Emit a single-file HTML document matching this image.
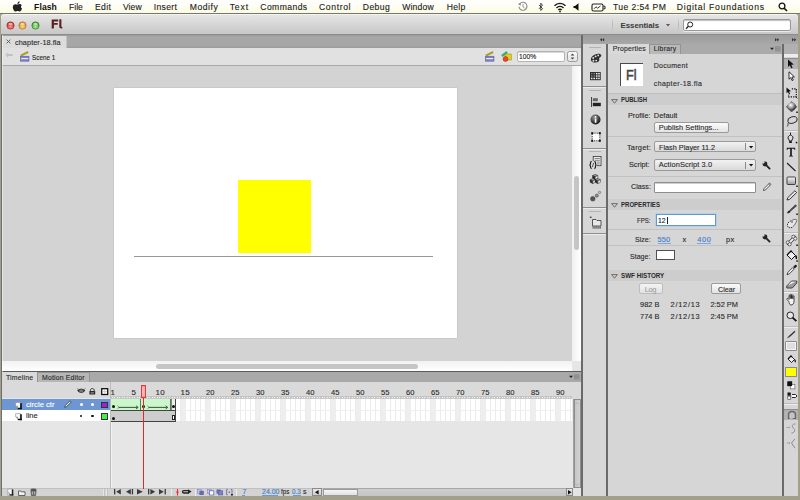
<!DOCTYPE html>
<html><head><meta charset="utf-8"><style>
html,body{margin:0;padding:0;width:800px;height:500px;overflow:hidden;background:#a2a08a;}
#root{position:relative;width:800px;height:500px;overflow:hidden;}
.r{position:absolute;}
.tx{position:absolute;font-family:"Liberation Sans",sans-serif;line-height:1;white-space:nowrap;-webkit-text-stroke:0.12px currentColor;}
svg{position:absolute;overflow:visible;}
</style></head><body><div id="root">
<div class="r" style="left:0px;top:0px;width:800px;height:500px;background:#a2a08a;"></div>
<div class="r" style="left:0px;top:0px;width:800px;height:13px;background:linear-gradient(#ffffff,#fbfbe4);"></div>
<div class="r" style="left:0px;top:13px;width:800px;height:1px;background:#77776a;"></div>
<div class="r" style="left:0px;top:14px;width:800px;height:1px;background:#a8a896;"></div>
<div class="r" style="left:1px;top:14px;width:797px;height:482px;background:#d5d5d5;border-radius:4px 4px 0 0;"></div>
<div class="r" style="left:1px;top:14px;width:797px;height:21px;background:linear-gradient(#e6e6e6,#c6c6c6);border-radius:4px 4px 0 0;box-shadow:inset 0 1px 0 #f4f4f4;"></div>
<div class="r" style="left:1px;top:34px;width:797px;height:1px;background:#8c8c8c;"></div>
<div class="r" style="left:612px;top:17px;width:1px;height:15px;background:linear-gradient(rgba(0,0,0,0),#b8b8b8,rgba(0,0,0,0));"></div>
<div class="r" style="left:678px;top:17px;width:1px;height:15px;background:linear-gradient(rgba(0,0,0,0),#b8b8b8,rgba(0,0,0,0));"></div>
<div class="r" style="left:1px;top:35px;width:581px;height:13px;background:linear-gradient(#9c9c9c,#a8a8a8 20%,#a6a6a6 85%,#999999);"></div>
<div class="r" style="left:1px;top:36px;width:65px;height:12px;background:#dcdcdc;box-shadow:1px 0 0 #c4c4c4;"></div>
<div class="r" style="left:1px;top:48px;width:581px;height:17px;background:#e1e1e1;"></div>
<div class="r" style="left:1px;top:65px;width:581px;height:1px;background:#a9a9a9;"></div>
<div class="r" style="left:1px;top:66px;width:571px;height:295px;background:#d3d3d3;"></div>
<div class="r" style="left:114px;top:88px;width:343px;height:250px;background:#ffffff;box-shadow:0 0 1px 0 #9a9a9a;"></div>
<div class="r" style="left:238px;top:180px;width:73px;height:73px;background:#ffff00;"></div>
<div class="r" style="left:134px;top:256px;width:299px;height:1px;background:#989898;"></div>
<div class="r" style="left:572px;top:66px;width:9px;height:295px;background:linear-gradient(90deg,#f0f0f0,#ffffff);"></div>
<div class="r" style="left:574px;top:176px;width:5px;height:74px;background:#c6c6c6;border-radius:3px;"></div>
<div class="r" style="left:1px;top:361px;width:571px;height:10px;background:linear-gradient(#f2f2f2,#ffffff);"></div>
<div class="r" style="left:156px;top:364px;width:262px;height:5px;background:#c6c6c6;border-radius:3px;"></div>
<div class="r" style="left:572px;top:361px;width:9px;height:10px;background:#e6e6e6;"></div>
<div class="r" style="left:1px;top:371px;width:581px;height:1px;background:#5a5a5a;"></div>
<div class="r" style="left:0.8px;top:35px;width:0.9px;height:461px;background:#6e6e6e;"></div>
<div class="r" style="left:1.7px;top:35px;width:0.8px;height:461px;background:rgba(255,255,255,0.45);"></div>
<div class="r" style="left:581px;top:35px;width:2px;height:461px;background:#6a6a6a;"></div>
<div class="r" style="left:583px;top:35px;width:215px;height:9px;background:linear-gradient(#9c9c9c,#a8a8a8);"></div>
<div class="r" style="left:583px;top:44px;width:23px;height:452px;background:#d7d7d7;"></div>
<div class="r" style="left:606px;top:44px;width:2px;height:452px;background:#6a6a6a;"></div>
<div class="r" style="left:608px;top:44px;width:174px;height:452px;background:#d6d6d6;"></div>
<div class="r" style="left:608px;top:44px;width:174px;height:10px;background:#aaaaaa;"></div>
<div class="r" style="left:608px;top:44px;width:41px;height:10px;background:#d9d9d9;"></div>
<div class="r" style="left:649px;top:44px;width:32px;height:10px;background:#b9b9b9;box-sizing:border-box;border:1px solid #949494;border-bottom:0;"></div>
<div class="r" style="left:782px;top:44px;width:2px;height:452px;background:#6a6a6a;"></div>
<div class="r" style="left:784px;top:44px;width:14px;height:452px;background:#d6d6d6;"></div>
<div class="r" style="left:784px;top:44px;width:14px;height:10px;background:#b0b0b0;"></div>
<div class="r" style="left:798px;top:35px;width:2px;height:461px;background:#a2a08a;"></div>
<div class="r" style="left:2px;top:372px;width:579px;height:10px;background:#a9a9a9;"></div>
<div class="r" style="left:2px;top:372px;width:35px;height:10px;background:#d9d9d9;"></div>
<div class="r" style="left:37px;top:372px;width:53px;height:10px;background:#b6b6b6;box-sizing:border-box;border:1px solid #949494;border-bottom:0;"></div>
<div class="r" style="left:2px;top:382px;width:571px;height:16px;background:#dadada;"></div>
<div class="r" style="left:2px;top:398px;width:571px;height:90px;background:#e6e6e6;"></div>
<div class="r" style="left:2px;top:399px;width:108px;height:11px;background:#6d96d3;"></div>
<div class="r" style="left:2px;top:410px;width:108px;height:11px;background:#ffffff;"></div>
<div class="r" style="left:110px;top:382px;width:1px;height:114px;background:#bcbcbc;"></div>
<div class="r" style="left:111px;top:421px;width:0.8px;height:75px;background:rgba(255,255,255,0.5);"></div>
<div class="r" style="left:2px;top:488px;width:579px;height:8px;background:#d3d3d3;box-shadow:inset 0 1px 0 #c0c0c0;"></div>
<div class="r" style="left:573px;top:382px;width:8px;height:106px;background:#d0d0d0;box-shadow:inset 1px 0 0 #a0a0a0;"></div>
<svg style="left:5.5px;top:20.5px;" width="9" height="9" viewBox="0 0 9 9"><defs><radialGradient id="g10" cx="50%" cy="65%" r="55%"><stop offset="0" stop-color="#ff9a90"/><stop offset="1" stop-color="#d02a20"/></radialGradient></defs><circle cx="4.5" cy="4.5" r="3.7" fill="url(#g10)" stroke="#8a2a22" stroke-width="0.5"/><ellipse cx="4.5" cy="2.9" rx="2.1" ry="1.2" fill="#fff" opacity="0.55"/></svg>
<svg style="left:18.0px;top:20.5px;" width="9" height="9" viewBox="0 0 9 9"><defs><radialGradient id="g22" cx="50%" cy="65%" r="55%"><stop offset="0" stop-color="#ffd890"/><stop offset="1" stop-color="#e08a18"/></radialGradient></defs><circle cx="4.5" cy="4.5" r="3.7" fill="url(#g22)" stroke="#9a6420" stroke-width="0.5"/><ellipse cx="4.5" cy="2.9" rx="2.1" ry="1.2" fill="#fff" opacity="0.55"/></svg>
<svg style="left:30.5px;top:20.5px;" width="9" height="9" viewBox="0 0 9 9"><defs><radialGradient id="g35" cx="50%" cy="65%" r="55%"><stop offset="0" stop-color="#b8eea0"/><stop offset="1" stop-color="#3e9e2a"/></radialGradient></defs><circle cx="4.5" cy="4.5" r="3.7" fill="url(#g35)" stroke="#386a28" stroke-width="0.5"/><ellipse cx="4.5" cy="2.9" rx="2.1" ry="1.2" fill="#fff" opacity="0.55"/></svg>
<svg style="left:50.5px;top:19px;" width="12" height="10" viewBox="0 0 12 10"><path d="M0.7 0.6 H7.2 V2.4 H2.9 V4.0 H6.7 V5.7 H2.9 V9.4 H0.7 Z" fill="#5a2020"/><path d="M8.3 0.2 H10.4 V7.3 C10.4 7.9 10.7 8.0 11.3 8.0 V9.4 C9.5 9.6 8.3 9.1 8.3 7.5 Z" fill="#5a2020"/></svg>
<svg style="left:12px;top:1px;" width="11" height="12" viewBox="0 0 11 12"><path d="M7.6 0.2 C7.7 1.6 6.8 2.9 5.4 3.0 C5.3 1.7 6.3 0.4 7.6 0.2 Z" fill="#222"/><path d="M5.4 3.6 C6.2 3.6 6.8 3.1 7.6 3.1 C8.5 3.1 9.3 3.6 9.8 4.3 C8.6 5.0 8.6 6.9 10.0 7.6 C9.6 8.8 8.8 10.6 7.6 10.6 C6.8 10.6 6.6 10.1 5.6 10.1 C4.6 10.1 4.3 10.6 3.5 10.6 C2.4 10.6 0.8 8.4 0.8 6.3 C0.8 4.5 2.0 3.3 3.4 3.3 C4.2 3.3 4.8 3.6 5.4 3.6 Z" fill="#222"/></svg>
<svg style="left:516.5px;top:1.2px;" width="12" height="11" viewBox="0 0 12 11"><path d="M2.0 5.8 A4.0 4.0 0 1 0 3.0 2.6" fill="none" stroke="#8a8a8a" stroke-width="1.1"/><path d="M0.8 3.0 L3.6 1.8 L3.8 4.8 Z" fill="#8a8a8a"/><path d="M6.0 3.0 V5.8 L7.6 7.0" fill="none" stroke="#8a8a8a" stroke-width="0.9"/></svg>
<svg style="left:538px;top:2px;" width="6" height="10" viewBox="0 0 6 10"><path d="M1 3 L4.5 6.5 L2.8 8.5 V1.2 L4.5 3.2 L1 6.8" fill="none" stroke="#333" stroke-width="0.9"/></svg>
<svg style="left:553px;top:1px;" width="14" height="12" viewBox="0 0 14 12"><path d="M1.5 4.8 A7.5 7.5 0 0 1 12.5 4.8" fill="none" stroke="#111" stroke-width="1.4"/><path d="M3.5 6.9 A4.8 4.8 0 0 1 10.5 6.9" fill="none" stroke="#111" stroke-width="1.4"/><path d="M5.4 8.9 A2.2 2.2 0 0 1 8.6 8.9" fill="none" stroke="#111" stroke-width="1.4"/><circle cx="7" cy="10.6" r="0.9" fill="#111"/></svg>
<svg style="left:572.5px;top:3px;" width="6" height="8" viewBox="0 0 6 8"><path d="M0.5 3 H2 L5.5 0.3 V7.7 L2 5 H0.5 Z" fill="#111"/></svg>
<svg style="left:591px;top:2.5px;" width="15" height="9" viewBox="0 0 15 9"><rect x="1" y="1" width="11" height="7" rx="1.5" fill="none" stroke="#222" stroke-width="1.1"/><path d="M12.5 3.2 H14 V5.8 H12.5" fill="none" stroke="#222" stroke-width="1"/><path d="M3 5.8 L5 3.8 L6.5 5.2 L9.5 3" fill="none" stroke="#222" stroke-width="0.9"/></svg>
<svg style="left:777.5px;top:2px;" width="10" height="10" viewBox="0 0 10 10"><circle cx="4" cy="4" r="2.9" fill="none" stroke="#111" stroke-width="1.3"/><path d="M6.2 6.2 L9 9" stroke="#111" stroke-width="1.6"/></svg>
<svg style="left:665.5px;top:24.2px;" width="4" height="3" viewBox="0 0 4 3"><path d="M0 0 H4 L2 2.5 Z" fill="#555"/></svg>
<div class="r" style="left:683px;top:19.2px;width:107.6px;height:11.4px;box-sizing:border-box;background:#fff;border:1px solid #9a9a9a;border-radius:2px;box-shadow:inset 0 1px 1px rgba(0,0,0,0.25), 0 1px 0 rgba(255,255,255,0.6);"></div>
<svg style="left:684.5px;top:20.5px;" width="9" height="9" viewBox="0 0 9 9"><circle cx="5.2" cy="3.5" r="2.5" fill="none" stroke="#222" stroke-width="1"/><path d="M3.4 5.3 L1 7.8" stroke="#222" stroke-width="1.3"/></svg>
<svg style="left:5.5px;top:39px;" width="5" height="5" viewBox="0 0 5 5"><path d="M0.6 0.6 L4.4 4.4 M4.4 0.6 L0.6 4.4" stroke="#555" stroke-width="0.9"/></svg>
<svg style="left:5px;top:52px;" width="8" height="6" viewBox="0 0 8 6"><path d="M0.3 3 L3.2 0.3 V1.9 H7.7 V4.1 H3.2 V5.7 Z" fill="#c2c2c2"/></svg>
<svg style="left:20px;top:51px;" width="9.5" height="10.5" viewBox="0 0 9.5 10.5"><path d="M0.8 4.6 L8.2 1.0" stroke="#a8a020" stroke-width="2"/><rect x="0.3" y="5.2" width="8.7" height="5" fill="#7f7fc8" stroke="#5a5aa0" stroke-width="0.5"/><rect x="1.2" y="7" width="7" height="1.2" fill="#e8e8ff"/></svg>
<svg style="left:485px;top:51px;" width="9.5" height="10.5" viewBox="0 0 9.5 10.5"><path d="M0.8 4.6 L8.2 1.0" stroke="#a8a020" stroke-width="2"/><rect x="0.3" y="5.2" width="8.7" height="5" fill="#7f7fc8" stroke="#5a5aa0" stroke-width="0.5"/><rect x="1.2" y="7" width="7" height="1.2" fill="#e8e8ff"/></svg>
<svg style="left:500.5px;top:50.5px;" width="11" height="11" viewBox="0 0 11 11"><path d="M0.8 5 L6.2 1.0" stroke="#30b080" stroke-width="2.2"/><rect x="4" y="3" width="6.2" height="6" fill="#e0d020" stroke="#908010" stroke-width="0.5"/><circle cx="4.5" cy="8" r="2.5" fill="#e84a20" stroke="#a03010" stroke-width="0.5"/></svg>
<div class="r" style="left:517px;top:50.5px;width:47.5px;height:11px;box-sizing:border-box;background:#fff;border:1px solid #b4b4b4;border-radius:2px;box-shadow:inset 0 1px 0 #d8d8d8;"></div>
<div class="r" style="left:566.5px;top:50.5px;width:11px;height:11px;box-sizing:border-box;background:linear-gradient(#fafafa,#e2e2e2);border:1px solid #9c9c9c;border-radius:2.5px;"></div>
<svg style="left:569.5px;top:52.5px;" width="5" height="7" viewBox="0 0 5 7"><path d="M0.6 2.6 L2.5 0.6 L4.4 2.6 Z M0.6 4.4 L2.5 6.4 L4.4 4.4 Z" fill="#444"/></svg>
<svg style="left:599.5px;top:37.5px;" width="5" height="4" viewBox="0 0 5 4"><path d="M0 1.8 L2 0 V3.6 Z M2.2 1.8 L4.2 0 V3.6 Z" fill="#333"/></svg>
<svg style="left:774.5px;top:37.5px;" width="5" height="4" viewBox="0 0 5 4"><path d="M0 0 L2 1.8 L0 3.6 Z M2.2 0 L4.2 1.8 L2.2 3.6 Z" fill="#333"/></svg>
<svg style="left:792px;top:37.5px;" width="5" height="4" viewBox="0 0 5 4"><path d="M0 0 L2 1.8 L0 3.6 Z M2.2 0 L4.2 1.8 L2.2 3.6 Z" fill="#333"/></svg>
<svg style="left:769.5px;top:46px;" width="11" height="6" viewBox="0 0 11 6"><path d="M0 1.8 H4 L2 4 Z" fill="#222"/><rect x="5" y="0.3" width="5.5" height="5.2" fill="#8e8e8e"/><path d="M5.5 1.6 H10 M5.5 3.1 H10 M5.5 4.6 H10" stroke="#9c9c9c" stroke-width="0.5"/></svg>
<svg style="left:568.5px;top:374px;" width="11" height="6" viewBox="0 0 11 6"><path d="M0 1.8 H4 L2 4 Z" fill="#222"/><rect x="5" y="0.3" width="5.5" height="5.2" fill="#8e8e8e"/><path d="M5.5 1.6 H10 M5.5 3.1 H10 M5.5 4.6 H10" stroke="#9c9c9c" stroke-width="0.5"/></svg>
<div class="r" style="left:619.75px;top:63px;width:23px;height:23px;background:#fff;"></div>
<div class="r" style="left:619.75px;top:63px;width:1.6px;height:23px;background:#4a4a4a;"></div>
<div class="r" style="left:619.75px;top:63px;width:23px;height:1.4px;background:#4a4a4a;"></div>
<div class="r" style="left:608px;top:93px;width:174px;height:1px;background:#bdbdbd;"></div>
<div class="r" style="left:608px;top:94px;width:174px;height:10.5px;background:#cdcdcd;"></div>
<div class="r" style="left:608px;top:136px;width:174px;height:1px;background:#c2c2c2;"></div>
<div class="r" style="left:608px;top:175.5px;width:174px;height:1px;background:#c2c2c2;"></div>
<div class="r" style="left:608px;top:199px;width:174px;height:10.5px;background:#cdcdcd;"></div>
<div class="r" style="left:608px;top:228.5px;width:174px;height:1px;background:#c2c2c2;"></div>
<div class="r" style="left:608px;top:244.5px;width:174px;height:1px;background:#c2c2c2;"></div>
<div class="r" style="left:608px;top:270px;width:174px;height:10.5px;background:#cdcdcd;"></div>
<svg style="left:610.5px;top:98.5px;" width="7" height="5" viewBox="0 0 7 5"><path d="M0.6 0.6 H6.4 L3.5 4.2 Z" fill="none" stroke="#555" stroke-width="0.8"/></svg>
<svg style="left:610.5px;top:203px;" width="7" height="5" viewBox="0 0 7 5"><path d="M0.6 0.6 H6.4 L3.5 4.2 Z" fill="none" stroke="#555" stroke-width="0.8"/></svg>
<svg style="left:610.5px;top:274px;" width="7" height="5" viewBox="0 0 7 5"><path d="M0.6 0.6 H6.4 L3.5 4.2 Z" fill="none" stroke="#555" stroke-width="0.8"/></svg>
<div class="r" style="left:654.4px;top:122px;width:74.2px;height:10.6px;box-sizing:border-box;background:linear-gradient(#fbfbfb,#e4e4e4);border:1px solid #9a9a9a;border-radius:2px;"></div>
<div class="r" style="left:654.2px;top:140.5px;width:102px;height:11.6px;box-sizing:border-box;background:linear-gradient(#f2f2f2,#dadada);border:1px solid #9a9a9a;border-radius:2px;"></div>
<div class="r" style="left:744.5px;top:143.0px;width:0.8px;height:7px;background:#8a8a8a;"></div>
<svg style="left:748.5px;top:145.5px;" width="5" height="3" viewBox="0 0 5 3"><path d="M0 0 H4.2 L2.1 2.6 Z" fill="#111"/></svg>
<div class="r" style="left:654.2px;top:159.4px;width:102px;height:11.6px;box-sizing:border-box;background:linear-gradient(#f2f2f2,#dadada);border:1px solid #9a9a9a;border-radius:2px;"></div>
<div class="r" style="left:744.5px;top:161.9px;width:0.8px;height:7px;background:#8a8a8a;"></div>
<svg style="left:748.5px;top:164.4px;" width="5" height="3" viewBox="0 0 5 3"><path d="M0 0 H4.2 L2.1 2.6 Z" fill="#111"/></svg>
<div class="r" style="left:654.2px;top:181.9px;width:102px;height:10.8px;box-sizing:border-box;background:#fff;border:1px solid #8e8e8e;border-radius:1px;box-shadow:inset 0 1px 0 #cfcfcf;"></div>
<div class="r" style="left:656px;top:213.75px;width:59.6px;height:12.2px;box-sizing:border-box;background:#fff;border:1px solid #5b9bd8;box-shadow:0 0 0 0.6px #a8c8ea;"></div>
<div class="r" style="left:667.2px;top:216.5px;width:0.8px;height:7px;background:#222;"></div>
<div class="r" style="left:657.5px;top:242.6px;width:13.1px;height:0.8px;background:#7aa7dc;"></div>
<div class="r" style="left:697.3px;top:242.6px;width:13.4px;height:0.8px;background:#7aa7dc;"></div>
<div class="r" style="left:656px;top:250.25px;width:19px;height:9.75px;box-sizing:border-box;background:#fff;border:1px solid #505050;"></div>
<div class="r" style="left:639px;top:283.1px;width:23.75px;height:11.3px;box-sizing:border-box;background:linear-gradient(#f4f4f4,#e2e2e2);border:1px solid #bdbdbd;border-radius:2px;"></div>
<div class="r" style="left:711px;top:283.1px;width:30.4px;height:11.3px;box-sizing:border-box;background:linear-gradient(#fbfbfb,#e2e2e2);border:1px solid #9c9c9c;border-radius:2px;"></div>
<svg style="left:762.25px;top:160.6px;" width="9" height="9" viewBox="0 0 9 9"><path d="M3.4 3.4 L7.6 7.6" stroke="#222" stroke-width="1.8" stroke-linecap="round"/><circle cx="3" cy="3" r="2.4" fill="#222"/><path d="M2.77 1.63 L1.36 0.0 L0.0 1.36 L1.63 2.77 Z" fill="#d6d6d6"/></svg>
<svg style="left:762.25px;top:233.8px;" width="9" height="9" viewBox="0 0 9 9"><path d="M3.4 3.4 L7.6 7.6" stroke="#222" stroke-width="1.8" stroke-linecap="round"/><circle cx="3" cy="3" r="2.4" fill="#222"/><path d="M2.77 1.63 L1.36 0.0 L0.0 1.36 L1.63 2.77 Z" fill="#d6d6d6"/></svg>
<svg style="left:762px;top:182px;" width="10" height="10" viewBox="0 0 10 10"><path d="M1.5 8.5 L2 6.6 L7.6 1.0 L9.0 2.4 L3.4 8.0 Z" fill="#f0f0f0" stroke="#333" stroke-width="0.8"/><path d="M6.6 2 L8 3.4" stroke="#333" stroke-width="0.7"/></svg>
<div class="r" style="left:583px;top:86px;width:23px;height:1px;background:#8e8e8e;"></div>
<div class="r" style="left:583px;top:87px;width:23px;height:1px;background:#ececec;"></div>
<div class="r" style="left:583px;top:147.5px;width:23px;height:1px;background:#8e8e8e;"></div>
<div class="r" style="left:583px;top:148.5px;width:23px;height:1px;background:#ececec;"></div>
<div class="r" style="left:583px;top:207px;width:23px;height:1px;background:#8e8e8e;"></div>
<div class="r" style="left:583px;top:208px;width:23px;height:1px;background:#ececec;"></div>
<div class="r" style="left:583px;top:232.5px;width:23px;height:1px;background:#8e8e8e;"></div>
<div class="r" style="left:583px;top:233.5px;width:23px;height:1px;background:#ececec;"></div>
<div class="r" style="left:589px;top:46.5px;width:11.5px;height:1px;background:#b4b4b4;"></div>
<div class="r" style="left:589px;top:90px;width:11.5px;height:1px;background:#b4b4b4;"></div>
<div class="r" style="left:589px;top:150.5px;width:11.5px;height:1px;background:#b4b4b4;"></div>
<div class="r" style="left:589px;top:211px;width:11.5px;height:1px;background:#b4b4b4;"></div>
<svg style="left:589.5px;top:53px;" width="12" height="11" viewBox="0 0 12 11"><path d="M1.2 7.8 C0.2 5.6 1.8 2.6 5.2 1.4 C8.4 0.3 11.2 0.9 11.3 2.6 C11.4 3.8 9.6 4.2 9.2 5.2 C8.9 6.2 10 7.2 8.6 8.4 C6.8 9.8 2.4 10.2 1.2 7.8 Z" fill="#2e2e2e"/><circle cx="3.2" cy="5.0" r="0.95" fill="#e4e4e4"/><circle cx="5.6" cy="3.4" r="0.95" fill="#e4e4e4"/><circle cx="8.2" cy="2.4" r="0.9" fill="#e4e4e4"/><circle cx="3.4" cy="7.8" r="0.95" fill="#e4e4e4"/><circle cx="6.2" cy="7.6" r="0.95" fill="#e4e4e4"/></svg>
<svg style="left:590px;top:71.8px;" width="11" height="8.5" viewBox="0 0 11 8.5"><rect x="0" y="0" width="10.7" height="8.2" fill="#2a2a2a"/><rect x="0.9" y="0.9" width="1.6" height="1.5" fill="#7a7a7a"/><rect x="0.9" y="3.3" width="1.6" height="1.5" fill="#7a7a7a"/><rect x="0.9" y="5.7" width="1.6" height="1.5" fill="#eeeeee"/><rect x="3.4" y="0.9" width="1.6" height="1.5" fill="#7a7a7a"/><rect x="3.4" y="3.3" width="1.6" height="1.5" fill="#7a7a7a"/><rect x="3.4" y="5.7" width="1.6" height="1.5" fill="#eeeeee"/><rect x="5.9" y="0.9" width="1.6" height="1.5" fill="#eeeeee"/><rect x="5.9" y="3.3" width="1.6" height="1.5" fill="#eeeeee"/><rect x="5.9" y="5.7" width="1.6" height="1.5" fill="#eeeeee"/><rect x="8.2" y="0.9" width="1.6" height="1.5" fill="#eeeeee"/><rect x="8.2" y="3.3" width="1.6" height="1.5" fill="#eeeeee"/><rect x="8.2" y="5.7" width="1.6" height="1.5" fill="#eeeeee"/></svg>
<svg style="left:591px;top:97px;" width="10" height="10" viewBox="0 0 10 10"><rect x="0" y="0" width="0.9" height="10" fill="#333"/><rect x="1.8" y="1.2" width="5" height="3" fill="#666"/><rect x="1.8" y="5.8" width="8" height="3.4" fill="#222"/></svg>
<svg style="left:590px;top:113.5px;" width="11" height="11" viewBox="0 0 11 11"><defs><radialGradient id="info" cx="40%" cy="30%" r="70%"><stop offset="0" stop-color="#999"/><stop offset="1" stop-color="#111"/></radialGradient></defs><circle cx="5.5" cy="5.5" r="5" fill="url(#info)"/><rect x="4.8" y="4.5" width="1.6" height="4.3" fill="#fff"/><circle cx="5.6" cy="2.9" r="0.9" fill="#fff"/></svg>
<svg style="left:590.5px;top:131.5px;" width="10" height="10" viewBox="0 0 10 10"><rect x="1.2" y="1.2" width="7.6" height="7.6" fill="#fff" stroke="#222" stroke-width="0.9" stroke-dasharray="1.2 1"/><rect x="0.2" y="0.2" width="2" height="2" fill="#111"/><rect x="0.2" y="7.8" width="2" height="2" fill="#111"/><rect x="7.8" y="0.2" width="2" height="2" fill="#111"/><rect x="7.8" y="7.8" width="2" height="2" fill="#111"/></svg>
<svg style="left:588.5px;top:155.5px;" width="13" height="13" viewBox="0 0 13 13"><rect x="4.2" y="0.5" width="7.8" height="9.2" fill="#f0f0f0" stroke="#333" stroke-width="0.8"/><path d="M5.6 2.5 H10.8 M5.6 4.3 H10.8 M5.6 6.1 H10.8 M5.6 7.9 H10.8" stroke="#555" stroke-width="0.7"/><rect x="0" y="5" width="8" height="8" fill="#d7d7d7"/><path d="M2.6 5.4 C1.4 5.4 1.6 7 1.4 8.2 C1.2 8.8 0.8 9 0.4 9 C0.8 9 1.2 9.2 1.4 9.8 C1.6 11 1.4 12.6 2.6 12.6 M5.4 5.4 C6.6 5.4 6.4 7 6.6 8.2 C6.8 8.8 7.2 9 7.6 9 C7.2 9 6.8 9.2 6.6 9.8 C6.4 11 6.6 12.6 5.4 12.6" fill="none" stroke="#111" stroke-width="1.1"/><path d="M4.6 7 L3.4 11" stroke="#333" stroke-width="0.8"/></svg>
<svg style="left:589.8px;top:174.2px;" width="11" height="11" viewBox="0 0 11 11"><polygon points="5.2,0.3 7.800000000000001,1.6 5.2,2.9 2.6,1.6" fill="#9a9a9a" stroke="#222" stroke-width="0.5"/><polygon points="2.6,1.6 5.2,2.9 5.2,5.5 2.6,4.2" fill="#2a2a2a" stroke="#222" stroke-width="0.5"/><polygon points="5.2,2.9 7.800000000000001,1.6 7.800000000000001,4.2 5.2,5.5" fill="#f4f4f4" stroke="#222" stroke-width="0.5"/><polygon points="2.8000000000000003,4.4 5.4,5.7 2.8000000000000003,7.0 0.2,5.7" fill="#9a9a9a" stroke="#222" stroke-width="0.5"/><polygon points="0.2,5.7 2.8000000000000003,7.0 2.8000000000000003,9.600000000000001 0.2,8.3" fill="#2a2a2a" stroke="#222" stroke-width="0.5"/><polygon points="2.8000000000000003,7.0 5.4,5.7 5.4,8.3 2.8000000000000003,9.600000000000001" fill="#f4f4f4" stroke="#222" stroke-width="0.5"/><polygon points="7.800000000000001,4.4 10.4,5.7 7.800000000000001,7.0 5.2,5.7" fill="#9a9a9a" stroke="#222" stroke-width="0.5"/><polygon points="5.2,5.7 7.800000000000001,7.0 7.800000000000001,9.600000000000001 5.2,8.3" fill="#2a2a2a" stroke="#222" stroke-width="0.5"/><polygon points="7.800000000000001,7.0 10.4,5.7 10.4,8.3 7.800000000000001,9.600000000000001" fill="#f4f4f4" stroke="#222" stroke-width="0.5"/></svg>
<svg style="left:589.5px;top:189.5px;" width="12" height="12" viewBox="0 0 12 12"><circle cx="2.8" cy="8.8" r="2.3" fill="#555" stroke="#333" stroke-width="0.5"/><circle cx="6.8" cy="5.6" r="1.6" fill="#888" stroke="#444" stroke-width="0.5"/><circle cx="9.5" cy="2.4" r="1.2" fill="#bbb" stroke="#555" stroke-width="0.5"/></svg>
<svg style="left:588.5px;top:215.5px;" width="13" height="13" viewBox="0 0 13 13"><path d="M0.5 0.8 L3 0.8 L1.75 2.2 Z" fill="#222"/><path d="M3.5 3.5 H7 L8 4.5 H12 V10 H3.5 Z" fill="#e8e8e8" stroke="#333" stroke-width="0.8"/><rect x="3.5" y="10.5" width="8.5" height="2" fill="#666"/><path d="M4.5 11.5 H11" stroke="#ddd" stroke-width="0.5" stroke-dasharray="1 0.8"/></svg>
<div class="r" style="left:784px;top:54px;width:14px;height:2.5px;background:#ececec;"></div>
<div class="r" style="left:784px;top:57.5px;width:13.5px;height:11.3px;background:#b2b2b2;box-shadow:inset 0 1px 1px #8a8a8a;"></div>
<div class="r" style="left:784px;top:129.5px;width:14px;height:1px;background:#bcbcbc;"></div>
<div class="r" style="left:784px;top:130.5px;width:14px;height:1px;background:#ececec;"></div>
<div class="r" style="left:784px;top:231.5px;width:14px;height:1px;background:#bcbcbc;"></div>
<div class="r" style="left:784px;top:232.5px;width:14px;height:1px;background:#ececec;"></div>
<div class="r" style="left:784px;top:291px;width:14px;height:1px;background:#bcbcbc;"></div>
<div class="r" style="left:784px;top:292px;width:14px;height:1px;background:#ececec;"></div>
<div class="r" style="left:784px;top:325.5px;width:14px;height:1px;background:#bcbcbc;"></div>
<div class="r" style="left:784px;top:326.5px;width:14px;height:1px;background:#ececec;"></div>
<div class="r" style="left:784px;top:403px;width:14px;height:1px;background:#bcbcbc;"></div>
<div class="r" style="left:784px;top:404px;width:14px;height:1px;background:#ececec;"></div>
<svg style="left:787px;top:58.5px;" width="9" height="10" viewBox="0 0 9 10"><path d="M1 0.5 L1 8 L2.8 6.3 L4.3 9.3 L5.6 8.7 L4.2 5.8 L6.8 5.6 Z" fill="#111"/></svg>
<svg style="left:787.5px;top:70.5px;" width="9" height="11" viewBox="0 0 9 11"><path d="M1 0.8 L1 8.2 L2.7 6.6 L4.1 9.6 L5.3 9.0 L3.9 6.1 L6.4 5.9 Z" fill="#fff" stroke="#111" stroke-width="0.85"/></svg>
<svg style="left:785.5px;top:86.5px;" width="12" height="12" viewBox="0 0 12 12"><path d="M0.5 0.5 L0.5 6.2 L1.9 4.9 L3.1 7.2 L4.1 6.7 L3.0 4.4 L5.1 4.3 Z" fill="#111"/><path d="M5.8 1.8 H10.3 V9.8 H2.6 V7.8" fill="none" stroke="#111" stroke-width="1.2" stroke-dasharray="1.3 1.1"/><path d="M9.6 9.6 L11.4 11.4" stroke="#111" stroke-width="0.9"/></svg>
<svg style="left:785.5px;top:100.5px;" width="12" height="13" viewBox="0 0 12 13"><defs><radialGradient id="sph" cx="40%" cy="35%" r="65%"><stop offset="0" stop-color="#fff"/><stop offset="0.55" stop-color="#9a9a9a"/><stop offset="1" stop-color="#2a2a2a"/></radialGradient></defs><path d="M5.6 0.6 L10.8 5.8 L5.6 11 L0.4 5.8 Z" fill="#777" stroke="#333" stroke-width="0.6"/><circle cx="5.6" cy="5.4" r="4.2" fill="url(#sph)"/><rect x="10.3" y="10.5" width="1.5" height="1.5" fill="#111"/></svg>
<svg style="left:785.5px;top:115.5px;" width="12" height="11" viewBox="0 0 12 11"><ellipse cx="6.5" cy="4" rx="4.8" ry="3.2" fill="none" stroke="#222" stroke-width="0.9" transform="rotate(-15 6.5 4)"/><path d="M2.5 6.5 C1.5 8 2.5 9.5 1.2 10.5" fill="none" stroke="#222" stroke-width="0.9"/></svg>
<svg style="left:786px;top:131.5px;" width="12" height="12" viewBox="0 0 12 12"><path d="M4.5 0.5 L4.5 3 M2 6 C2 4 3.5 3.5 4.5 3 C5.5 3.5 7 4 7 6 L5.5 9 H3.5 L2 6 Z" fill="#ddd" stroke="#111" stroke-width="0.9"/><rect x="3.2" y="9.2" width="2.6" height="1.8" fill="#111"/><rect x="9.8" y="9.8" width="1.5" height="1.5" fill="#111"/></svg>
<svg style="left:786px;top:147px;" width="11" height="10" viewBox="0 0 11 10"><path d="M0.8 0.7 H9.2 V3 H8.6 L8.2 1.8 H5.8 V8.6 L7 9 V9.5 H3 V9 L4.2 8.6 V1.8 H1.8 L1.4 3 H0.8 Z" fill="#111"/></svg>
<svg style="left:786px;top:162px;" width="11" height="10" viewBox="0 0 11 10"><path d="M1 1 L9.5 9" stroke="#222" stroke-width="1.1"/></svg>
<svg style="left:785.5px;top:176px;" width="12" height="11" viewBox="0 0 12 11"><defs><linearGradient id="rg" x1="0" y1="0" x2="0" y2="1"><stop offset="0" stop-color="#fafafa"/><stop offset="1" stop-color="#9a9a9a"/></linearGradient></defs><rect x="1" y="1" width="8.5" height="7.5" rx="0.8" fill="url(#rg)" stroke="#333" stroke-width="0.9"/><rect x="10.3" y="9.5" width="1.5" height="1.5" fill="#111"/></svg>
<svg style="left:785.5px;top:190px;" width="12" height="11" viewBox="0 0 12 11"><path d="M1 10 L1.8 7.6 L8.8 0.8 L10.6 2.6 L3.6 9.4 Z" fill="#e6e6e6" stroke="#222" stroke-width="0.9"/></svg>
<svg style="left:785.5px;top:204px;" width="12" height="11" viewBox="0 0 12 11"><path d="M9.5 0.8 L10.6 1.9 L4.6 7 L3.8 6.2 Z" fill="#555" stroke="#222" stroke-width="0.6"/><path d="M3.6 6.4 C2 6.6 1.6 8 0.8 9.2 C2.4 9.4 4.4 8.8 4.6 7.2 Z" fill="#222"/><rect x="10.3" y="9.5" width="1.5" height="1.5" fill="#111"/></svg>
<svg style="left:785.5px;top:218px;" width="12" height="11" viewBox="0 0 12 11"><path d="M3 4 C0.5 6 1 9.5 4 9.8 C7 10 9.5 6 10.8 2.5 L9.5 1 C7.5 2 5.5 2 3 4 Z" fill="#e6e6e6" stroke="#222" stroke-width="0.9" stroke-dasharray="1.3 0.8"/><circle cx="6" cy="4" r="0.8" fill="#333"/></svg>
<svg style="left:785.5px;top:235px;" width="12" height="11" viewBox="0 0 12 11"><path d="M2.5 8.5 L8.5 2.5" stroke="#333" stroke-width="3.2" stroke-linecap="round"/><path d="M2.5 8.5 L8.5 2.5" stroke="#f2f2f2" stroke-width="1.8" stroke-linecap="round"/><circle cx="1.8" cy="7.4" r="1.6" fill="#f2f2f2" stroke="#333" stroke-width="0.7"/><circle cx="3.6" cy="9.3" r="1.6" fill="#f2f2f2" stroke="#333" stroke-width="0.7"/><circle cx="7.4" cy="1.8" r="1.6" fill="#f2f2f2" stroke="#333" stroke-width="0.7"/><circle cx="9.3" cy="3.6" r="1.6" fill="#f2f2f2" stroke="#333" stroke-width="0.7"/><rect x="10.3" y="9.5" width="1.5" height="1.5" fill="#111"/></svg>
<svg style="left:785.5px;top:249.5px;" width="12" height="12" viewBox="0 0 12 12"><path d="M1 5 L5 1 L9.5 5.5 L5.5 9.5 Z" fill="#f0f0f0" stroke="#111" stroke-width="1"/><path d="M9.5 5.5 C10.5 6.5 10.5 8 10.3 9" fill="none" stroke="#111" stroke-width="1.6"/><path d="M1 5 L5 1 L6 2" fill="none" stroke="#111" stroke-width="1.4"/><rect x="10.3" y="10.3" width="1.5" height="1.5" fill="#111"/></svg>
<svg style="left:785.5px;top:264px;" width="12" height="12" viewBox="0 0 12 12"><path d="M1 10.8 L2 8.2 L6.5 3.7 L8 5.2 L3.5 9.7 Z" fill="#f4f4f4" stroke="#222" stroke-width="0.8"/><path d="M7 3 L9 1 C10 0.3 11.5 1.6 10.8 2.6 L8.8 4.6 Z" fill="#222"/></svg>
<svg style="left:785.5px;top:280px;" width="12" height="9" viewBox="0 0 12 9"><path d="M0.8 6 L5.5 1 H10.8 L6.3 6 Z" fill="#f4f4f4" stroke="#333" stroke-width="0.9"/><path d="M0.8 6 V8 H6.3 L10.8 3 V1" fill="#9a9a9a" stroke="#333" stroke-width="0.9"/></svg>
<svg style="left:785.5px;top:293.5px;" width="12" height="12" viewBox="0 0 12 12"><path d="M2.8 7.5 L1 5.6 C0.4 4.8 1.4 4 2.1 4.6 L3 5.5 V1.8 C3 1 4.2 1 4.2 1.8 V4.6 V0.9 C4.2 0.1 5.5 0.1 5.5 0.9 V4.6 V1.4 C5.5 0.6 6.8 0.6 6.8 1.4 V4.8 V2.4 C6.8 1.6 8 1.6 8 2.4 V7 C8 9.5 7 11 4.8 11 C3.8 11 3.2 9 2.8 7.5 Z" fill="#f4f4f4" stroke="#222" stroke-width="0.8"/></svg>
<svg style="left:785.5px;top:310.5px;" width="12" height="11" viewBox="0 0 12 11"><circle cx="4.3" cy="4.3" r="3.3" fill="#e8e8e8" stroke="#222" stroke-width="1"/><path d="M6.6 6.6 L10.4 10.2" stroke="#111" stroke-width="1.8"/></svg>
<svg style="left:786px;top:330px;" width="11" height="9" viewBox="0 0 11 9"><path d="M1 8.5 C2 6.5 3.5 5.5 5 4 L8.5 0.8 L9.4 1.7 L6 5 C4.5 6.5 3 7.5 1 8.5 Z" fill="#333"/></svg>
<div class="r" style="left:785px;top:340.5px;width:12.3px;height:10px;box-sizing:border-box;background:#dedede;border:1px solid #8a8a8a;border-radius:1px;box-shadow:inset 0 0 0 1px #f4f4f4;"></div>
<svg style="left:786.5px;top:354.5px;" width="10" height="8" viewBox="0 0 10 8"><path d="M1 4 L4 1 L7.5 4.5 L4.5 7.5 Z" fill="#f0f0f0" stroke="#111" stroke-width="0.9"/><path d="M1 4 L4 1 L5 2" fill="none" stroke="#111" stroke-width="1.3"/><path d="M7.5 4.5 C8.3 5.3 8.5 6.5 8.2 7.2" fill="none" stroke="#111" stroke-width="1.2"/></svg>
<div class="r" style="left:785px;top:367px;width:12.3px;height:9.7px;box-sizing:border-box;background:#ffff00;border:1px solid #8a8a8a;"></div>
<svg style="left:787px;top:381px;" width="9" height="9" viewBox="0 0 9 9"><rect x="0.5" y="0.5" width="4.6" height="4.6" fill="#111"/><rect x="3.3" y="3.3" width="4.6" height="4.6" fill="#fff" stroke="#555" stroke-width="0.6"/><path d="M0.5 0.5 H5.1 V5.1 H0.5 Z" fill="#111"/></svg>
<svg style="left:786.5px;top:392px;" width="11" height="8" viewBox="0 0 11 8"><rect x="0.5" y="0.5" width="3.2" height="3.2" fill="#111"/><rect x="0.8" y="4.2" width="3" height="3" fill="#fff" stroke="#333" stroke-width="0.6"/><path d="M5 2.5 H8.5 L10 4 L8.5 5.5 H5" fill="#fff" stroke="#111" stroke-width="0.9"/></svg>
<div class="r" style="left:784px;top:408.8px;width:13.5px;height:11.2px;background:#b4b4b4;box-shadow:inset 0 1px 1px #8a8a8a;"></div>
<svg style="left:786.5px;top:410px;" width="10" height="9" viewBox="0 0 10 9"><path d="M1.5 8.5 V4.5 C1.5 0.5 8.5 0.5 8.5 4.5 V8.5" fill="none" stroke="#6a6a6a" stroke-width="1.4"/><path d="M3.8 8.5 V4.8 C3.8 2.8 6.2 2.8 6.2 4.8 V8.5" fill="none" stroke="#d8d8d8" stroke-width="1"/><path d="M1 8.5 H2.8 M5.8 8.5 H8.8" stroke="#555" stroke-width="0.8"/></svg>
<svg style="left:785.5px;top:422.5px;" width="12" height="11" viewBox="0 0 12 11"><path d="M0.5 4.5 H4" stroke="#9a9a9a" stroke-width="0.8"/><path d="M3 3.5 L4.2 4.5 L3 5.5" fill="#9a9a9a"/><path d="M9.5 1 C6 0.5 5.5 4 7.5 5.2 C9.5 6.4 9 10 5.5 10" fill="none" stroke="#8a8a8a" stroke-width="1"/></svg>
<svg style="left:785.5px;top:437.5px;" width="12" height="11" viewBox="0 0 12 11"><path d="M0.5 5 H4" stroke="#9a9a9a" stroke-width="0.8"/><path d="M3 4 L4.2 5 L3 6" fill="#9a9a9a"/><path d="M9 0.8 L5.5 5 L9 10.2" fill="none" stroke="#8a8a8a" stroke-width="1"/></svg>
<svg style="left:76.5px;top:388px;" width="8.5" height="6.5" viewBox="0 0 8.5 6.5"><path d="M0.3 2.6 C2 0.2 6.5 0.2 8.2 2.6 C6.5 5.9 2 5.9 0.3 2.6 Z" fill="#2a2a2a"/><ellipse cx="4.3" cy="2.9" rx="2.2" ry="1.6" fill="#777"/><path d="M1 1.5 L0.4 0.4 M7.5 1.5 L8.2 0.4" stroke="#333" stroke-width="0.6"/></svg>
<svg style="left:89px;top:387.8px;" width="6.6" height="6.8" viewBox="0 0 6.6 6.8"><path d="M1.4 3 V2.2 C1.4 0 5.2 0 5.2 2.2 V3" fill="none" stroke="#333" stroke-width="1"/><rect x="0.4" y="3" width="5.8" height="3.6" rx="0.6" fill="#2a2a2a"/><rect x="1.6" y="4" width="3.4" height="1.6" fill="#777"/></svg>
<svg style="left:100.8px;top:388px;" width="7.4" height="7.2" viewBox="0 0 7.4 7.2"><rect x="0.7" y="0.7" width="6" height="5.8" fill="#fff" stroke="#111" stroke-width="1.3"/><path d="M3.7 1.4 V6 M1.4 3.6 H6" stroke="#bbb" stroke-width="0.7"/></svg>
<svg style="left:15px;top:402px;" width="7.5" height="7.5" viewBox="0 0 7.5 7.5"><path d="M0.6 0.6 H5.4 V6.2 H3 L0.6 3.8 Z" fill="#fafafa" stroke="#8a8a8a" stroke-width="0.6"/><path d="M0.6 3.8 H3 V6.2 Z" fill="#9a9a9a"/><rect x="5.2" y="1.2" width="1.6" height="6" fill="#111"/><rect x="2.8" y="5.8" width="4" height="1.4" fill="#111"/></svg>
<svg style="left:15px;top:413px;" width="7.5" height="7.5" viewBox="0 0 7.5 7.5"><path d="M0.6 0.6 H5.4 V6.2 H3 L0.6 3.8 Z" fill="#fafafa" stroke="#8a8a8a" stroke-width="0.6"/><path d="M0.6 3.8 H3 V6.2 Z" fill="#9a9a9a"/><rect x="5.2" y="1.2" width="1.6" height="6" fill="#111"/><rect x="2.8" y="5.8" width="4" height="1.4" fill="#111"/></svg>
<svg style="left:63.5px;top:400px;" width="8" height="8" viewBox="0 0 8 8"><path d="M0.8 7.3 L1.2 5.6 L6 0.8 L7.2 2 L2.4 6.8 Z" fill="#f4f4f4" stroke="#222" stroke-width="0.7"/></svg>
<div class="r" style="left:79.5px;top:403.3px;width:3px;height:3px;background:#fff;border-radius:50%;"></div>
<div class="r" style="left:79.6px;top:414.6px;width:2.8px;height:2.8px;background:#111;border-radius:50%;"></div>
<div class="r" style="left:91.3px;top:403.3px;width:3px;height:3px;background:#fff;border-radius:50%;"></div>
<div class="r" style="left:91.39999999999999px;top:414.6px;width:2.8px;height:2.8px;background:#111;border-radius:50%;"></div>
<div class="r" style="left:101.2px;top:401.5px;width:6.8px;height:6.8px;box-sizing:border-box;background:#9b24d0;border:0.9px solid #333;"></div>
<div class="r" style="left:101.2px;top:412.9px;width:6.8px;height:6.8px;box-sizing:border-box;background:#44ee44;border:0.9px solid #333;"></div>
<div class="r" style="left:111px;top:396px;width:461px;height:3.6px;background:linear-gradient(#c2c2c2,#cccccc);"></div>
<div class="r" style="left:111px;top:396.5px;width:461px;height:1.4px;background:repeating-linear-gradient(90deg,transparent 0,transparent 1px,#f2f2f2 1px,#f2f2f2 2px,transparent 2px,transparent 3px,#f2f2f2 3px,#f2f2f2 4px,transparent 4px,transparent 5px);"></div>
<div class="r" style="left:111px;top:399px;width:461px;height:22px;background:repeating-linear-gradient(90deg,#eeeeee 0,#eeeeee 5px,transparent 5px,transparent 25px),repeating-linear-gradient(90deg,#ffffff 0,#ffffff 4px,#ebebeb 4px,#ebebeb 5px);background-position:20px 0,0 0;"></div>
<div class="r" style="left:111px;top:410px;width:461px;height:1px;background:#efefef;"></div>
<div class="r" style="left:111px;top:399px;width:65px;height:11px;background:#ccf7cc;"></div>
<div class="r" style="left:171px;top:399px;width:5px;height:11px;background:#ededed;box-shadow:inset 1px 0 0 #8a8a8a;"></div>
<div class="r" style="left:140px;top:399px;width:1px;height:11px;background:#5a7a5a;"></div>
<div class="r" style="left:170.3px;top:399px;width:0.8px;height:11px;background:#5a7a5a;"></div>
<div class="r" style="left:111px;top:410px;width:65px;height:1px;background:#444;"></div>
<div class="r" style="left:111px;top:411px;width:65px;height:10.3px;background:#cdcdcd;"></div>
<div class="r" style="left:111px;top:421px;width:65px;height:1px;background:#444;"></div>
<div class="r" style="left:175.2px;top:399px;width:1px;height:23px;background:#444;"></div>
<div class="r" style="left:172px;top:415px;width:3px;height:5.4px;box-sizing:border-box;background:#fff;border:0.8px solid #222;"></div>
<div class="r" style="left:111.80000000000001px;top:405.29999999999995px;width:3.2px;height:3.2px;background:#111;border-radius:50%;"></div>
<div class="r" style="left:141.9px;top:405.29999999999995px;width:3.2px;height:3.2px;background:#111;border-radius:50%;"></div>
<div class="r" style="left:171.70000000000002px;top:405.29999999999995px;width:3.2px;height:3.2px;background:#111;border-radius:50%;"></div>
<div class="r" style="left:111.80000000000001px;top:416.7px;width:3.2px;height:3.2px;background:#111;border-radius:50%;"></div>
<svg style="left:117px;top:403.5px;" width="22" height="6" viewBox="0 0 22 6"><path d="M0.5 1.5 L2 3.4 L0.5 5" fill="none" stroke="#6a8a6a" stroke-width="0.7"/><path d="M1.5 3.4 H21" stroke="#456045" stroke-width="1.1"/><path d="M19 1.8 L21.2 3.4 L19 5" fill="none" stroke="#456045" stroke-width="1"/></svg>
<svg style="left:147.2px;top:403.5px;" width="21.600000000000023" height="6" viewBox="0 0 21.600000000000023 6"><path d="M0.5 1.5 L2 3.4 L0.5 5" fill="none" stroke="#6a8a6a" stroke-width="0.7"/><path d="M1.5 3.4 H20.600000000000023" stroke="#456045" stroke-width="1.1"/><path d="M18.600000000000023 1.8 L20.800000000000022 3.4 L18.600000000000023 5" fill="none" stroke="#456045" stroke-width="1"/></svg>
<div class="r" style="left:143px;top:397.5px;width:1px;height:91px;background:#e02828;"></div>
<div class="r" style="left:140.5px;top:385.2px;width:5.8px;height:12.6px;box-sizing:border-box;background:#ff8e8e;border:0.9px solid #e03a3a;"></div>
<div class="r" style="left:141.8px;top:386.6px;width:3.2px;height:9.8px;background:#ffb4b4;"></div>
<svg style="left:7px;top:488.2px;" width="7" height="8" viewBox="0 0 7 8"><path d="M0.8 1 H5.4 V7.2 H0.8 Z" fill="#fafafa" stroke="#8a8a8a" stroke-width="0.6"/><rect x="4.8" y="1.5" width="1.5" height="6" fill="#222"/><rect x="2.5" y="6.2" width="3.8" height="1.3" fill="#222"/><path d="M0.8 4.6 H2.8 V7.2 Z" fill="#999"/></svg>
<svg style="left:18px;top:489.5px;" width="7.5" height="6" viewBox="0 0 7.5 6"><path d="M0.5 1 H2.8 L3.4 1.8 H7 V5.5 H0.5 Z" fill="#f0f0f0" stroke="#444" stroke-width="0.8"/></svg>
<svg style="left:30px;top:488.3px;" width="7" height="8" viewBox="0 0 7 8"><ellipse cx="3.5" cy="1.6" rx="3" ry="1.2" fill="#555"/><path d="M0.8 2.5 H6.2 L5.6 7.5 H1.4 Z" fill="#6a6a6a" stroke="#333" stroke-width="0.5"/><path d="M2.3 3.5 V6.5 M4.7 3.5 V6.5" stroke="#e8e8e8" stroke-width="0.7"/></svg>
<div class="r" style="left:103px;top:489px;width:0.8px;height:6.5px;background:#e6e6e6;"></div>
<div class="r" style="left:104px;top:489px;width:0.8px;height:6.5px;background:#c4c4c4;"></div>
<div class="r" style="left:106px;top:489px;width:0.8px;height:6.5px;background:#e6e6e6;"></div>
<div class="r" style="left:107px;top:489px;width:0.8px;height:6.5px;background:#c4c4c4;"></div>
<svg style="left:114.2px;top:489.2px;" width="7" height="5.4" viewBox="0 0 7 5.4"><rect x="0" y="0" width="1.3" height="5.4" fill="#3a3a3a"/><path d="M6.8 0 V5.4 L2.2 2.7 Z" fill="#3a3a3a"/></svg>
<svg style="left:125.6px;top:489.2px;" width="7.2" height="5.4" viewBox="0 0 7.2 5.4"><path d="M4.8 0 V5.4 L0 2.7 Z" fill="#3a3a3a"/><rect x="5.8" y="0" width="1.3" height="5.4" fill="#3a3a3a"/></svg>
<svg style="left:137px;top:489.2px;" width="6" height="5.4" viewBox="0 0 6 5.4"><path d="M0 0 V5.4 L5.8 2.7 Z" fill="#3a3a3a"/></svg>
<svg style="left:147.9px;top:489.2px;" width="7.4" height="5.4" viewBox="0 0 7.4 5.4"><rect x="0" y="0" width="1.3" height="5.4" fill="#3a3a3a"/><path d="M2.4 0 V5.4 L7.2 2.7 Z" fill="#3a3a3a"/></svg>
<svg style="left:159.2px;top:489.2px;" width="7" height="5.4" viewBox="0 0 7 5.4"><path d="M0 0 V5.4 L4.8 2.7 Z" fill="#3a3a3a"/><rect x="5.6" y="0" width="1.3" height="5.4" fill="#3a3a3a"/></svg>
<div class="r" style="left:170.6px;top:488.5px;width:0.8px;height:7.5px;background:#ececec;"></div>
<svg style="left:175.8px;top:488.8px;" width="3" height="6.5" viewBox="0 0 3 6.5"><path d="M1.5 0 V6.5" stroke="#ff2020" stroke-width="1"/><circle cx="1.5" cy="3.2" r="1.1" fill="#ff2020"/></svg>
<svg style="left:181.8px;top:489.4px;" width="10" height="5.2" viewBox="0 0 10 5.2"><path d="M6 0.3 L9.6 2.6 L6 4.9 Z" fill="#222"/><path d="M6.5 1.6 H2 C0 1.6 0 4.0 2 4.0 H6.5" fill="none" stroke="#222" stroke-width="1.3"/></svg>
<div class="r" style="left:194.5px;top:488.5px;width:0.8px;height:7.5px;background:#ececec;"></div>
<svg style="left:197px;top:489px;" width="7.2" height="6.4" viewBox="0 0 7.2 6.4"><rect x="0.5" y="0.5" width="4.2" height="4.2" fill="#c4c4ea" stroke="#7a7ac0" stroke-width="0.5"/><rect x="2.4" y="1.8" width="4.4" height="4.2" fill="#6868b8"/></svg>
<svg style="left:206.7px;top:489px;" width="7.2" height="6.4" viewBox="0 0 7.2 6.4"><rect x="0.5" y="0.5" width="4.2" height="4.2" fill="#c4c4ea" stroke="#7a7ac0" stroke-width="0.5"/><rect x="2.4" y="1.8" width="4.4" height="4.2" fill="#fff" stroke="#6868b8" stroke-width="0.8"/></svg>
<svg style="left:216px;top:489px;" width="7.2" height="6.4" viewBox="0 0 7.2 6.4"><rect x="0.5" y="0.5" width="4.2" height="4.2" fill="#6868b8"/><rect x="2.4" y="1.8" width="4.4" height="4.2" fill="#8080c8" stroke="#5050a0" stroke-width="0.5"/></svg>
<svg style="left:225.6px;top:489px;" width="7" height="6.5" viewBox="0 0 7 6.5"><path d="M1.8 0.5 H0.6 V5.8 H1.8 M4.8 0.5 H6 V5.8 H4.8" fill="none" stroke="#6a6ab8" stroke-width="0.9"/><circle cx="3.3" cy="3.1" r="0.7" fill="#333"/><rect x="5.2" y="5" width="1.6" height="1.5" fill="#111"/></svg>
<div class="r" style="left:236px;top:488.5px;width:0.8px;height:7.5px;background:#ececec;"></div>
<div class="r" style="left:241.9px;top:495.3px;width:3.3px;height:0.8px;background:#6a9ad8;"></div>
<div class="r" style="left:261.9px;top:495.3px;width:16.2px;height:0.8px;background:#6a9ad8;"></div>
<div class="r" style="left:292.5px;top:495.3px;width:8.8px;height:0.8px;background:#6a9ad8;"></div>
<div class="r" style="left:311.9px;top:488.1px;width:10.6px;height:8.1px;box-sizing:border-box;background:linear-gradient(#e8e8e8,#cfcfcf);border:1px solid #8a8a8a;"></div>
<svg style="left:315px;top:490px;" width="4" height="4.4" viewBox="0 0 4 4.4"><path d="M3.6 0 V4.4 L0 2.2 Z" fill="#111"/></svg>
<div class="r" style="left:322.5px;top:488.1px;width:244px;height:8.1px;background:linear-gradient(#d0d0d0,#c4c4c4);box-shadow:inset 0 1px 0 #a8a8a8;"></div>
<div class="r" style="left:322.5px;top:488.6px;width:35.5px;height:7.2px;box-sizing:border-box;background:linear-gradient(#f6f6f6,#e0e0e0);border:0.8px solid #9a9a9a;"></div>
<div class="r" style="left:566px;top:488.1px;width:7px;height:8.1px;box-sizing:border-box;background:linear-gradient(#e8e8e8,#cfcfcf);border:1px solid #8a8a8a;"></div>
<svg style="left:567.8px;top:490px;" width="4" height="4.4" viewBox="0 0 4 4.4"><path d="M0 0 V4.4 L3.6 2.2 Z" fill="#111"/></svg>
<div class="r" style="left:573px;top:488.1px;width:8px;height:8.1px;background:#e4e4e4;"></div>
<div class="r" style="left:573px;top:382px;width:8px;height:17px;background:#dadada;"></div>
<div class="r" style="left:573.6px;top:399.2px;width:7.2px;height:88.9px;box-sizing:border-box;background:linear-gradient(90deg,#c6c6c6,#d2d2d2);border:0.8px solid #8e8e8e;"></div>
<svg style="left:575px;top:401.5px;" width="5" height="3" viewBox="0 0 5 3"><path d="M0.3 2.6 L2.3 0.4 L4.3 2.6" fill="none" stroke="#aaa" stroke-width="0.7"/></svg>
<svg style="left:575px;top:482.5px;" width="5" height="3" viewBox="0 0 5 3"><path d="M0.3 0.4 L2.3 2.6 L4.3 0.4" fill="none" stroke="#aaa" stroke-width="0.7"/></svg>
<div class="tx" style="left:34.10px;top:3px;font-size:8.6px;font-weight:bold;-webkit-text-stroke:0;letter-spacing:0.075px;color:#111;">Flash</div>
<div class="tx" style="left:69.00px;top:3px;font-size:8.6px;letter-spacing:0.000px;color:#222;">File</div>
<div class="tx" style="left:95.00px;top:3px;font-size:8.6px;letter-spacing:0.367px;color:#222;">Edit</div>
<div class="tx" style="left:122.90px;top:3px;font-size:8.6px;letter-spacing:0.100px;color:#222;">View</div>
<div class="tx" style="left:153.80px;top:3px;font-size:8.6px;letter-spacing:0.300px;color:#222;">Insert</div>
<div class="tx" style="left:189.80px;top:3px;font-size:8.6px;letter-spacing:0.520px;color:#222;">Modify</div>
<div class="tx" style="left:229.70px;top:3px;font-size:8.6px;letter-spacing:0.867px;color:#222;">Text</div>
<div class="tx" style="left:260.30px;top:3px;font-size:8.6px;letter-spacing:0.414px;color:#222;">Commands</div>
<div class="tx" style="left:319.00px;top:3px;font-size:8.6px;letter-spacing:0.633px;color:#222;">Control</div>
<div class="tx" style="left:362.80px;top:3px;font-size:8.6px;letter-spacing:0.400px;color:#222;">Debug</div>
<div class="tx" style="left:402.20px;top:3px;font-size:8.6px;letter-spacing:0.180px;color:#222;">Window</div>
<div class="tx" style="left:446.70px;top:3px;font-size:8.6px;letter-spacing:0.300px;color:#222;">Help</div>
<div class="tx" style="left:613.00px;top:3px;font-size:8.6px;letter-spacing:0.400px;color:#222;">Tue 2:54 PM</div>
<div class="tx" style="left:676.80px;top:3px;font-size:8.6px;letter-spacing:0.756px;color:#222;">Digital Foundations</div>
<div class="tx" style="left:620.60px;top:22px;font-size:7.9px;font-weight:bold;-webkit-text-stroke:0;letter-spacing:-0.067px;color:#3a3a3a;">Essentials</div>
<div class="tx" style="left:15.00px;top:39px;font-size:7.3px;letter-spacing:0.077px;color:#2a2a2a;">chapter-18.fla</div>
<div class="tx" style="left:31.75px;top:54px;font-size:7.8px;letter-spacing:0.000px;color:#222;transform:scaleX(0.8143);transform-origin:0 0;">Scene 1</div>
<div class="tx" style="left:518.80px;top:53px;font-size:7.0px;letter-spacing:0.000px;color:#222;transform:scaleX(0.9611);transform-origin:0 0;">100%</div>
<div class="tx" style="left:612.75px;top:46px;font-size:6.9px;letter-spacing:0.167px;color:#2a2a2a;">Properties</div>
<div class="tx" style="left:653.75px;top:46px;font-size:6.9px;letter-spacing:0.250px;color:#2a2a2a;">Library</div>
<div class="tx" style="left:653.75px;top:62px;font-size:7.0px;letter-spacing:0.286px;color:#2a2a2a;">Document</div>
<div class="tx" style="left:653.75px;top:80px;font-size:7.0px;letter-spacing:0.408px;color:#2a2a2a;">chapter-18.fla</div>
<div class="tx" style="left:626.03px;top:68px;font-size:14.5px;letter-spacing:0.000px;color:#444;transform:scaleX(0.8700);transform-origin:0 0;-webkit-text-stroke:0.5px #444;">Fl</div>
<div class="tx" style="left:620.60px;top:96px;font-size:7.0px;font-weight:bold;-webkit-text-stroke:0;letter-spacing:0.000px;color:#2a2a2a;transform:scaleX(0.8484);transform-origin:0 0;">PUBLISH</div>
<div class="tx" style="left:627.50px;top:112px;font-size:7.4px;letter-spacing:0.000px;color:#2a2a2a;transform:scaleX(0.9783);transform-origin:0 0;">Profile:</div>
<div class="tx" style="left:653.75px;top:112px;font-size:7.4px;letter-spacing:0.042px;color:#2a2a2a;">Default</div>
<div class="tx" style="left:658.75px;top:124px;font-size:7.4px;letter-spacing:0.033px;color:#2a2a2a;">Publish Settings...</div>
<div class="tx" style="left:626.90px;top:144px;font-size:7.4px;letter-spacing:0.217px;color:#2a2a2a;">Target:</div>
<div class="tx" style="left:658.75px;top:144px;font-size:7.4px;letter-spacing:0.000px;color:#2a2a2a;transform:scaleX(0.9860);transform-origin:0 0;">Flash Player 11.2</div>
<div class="tx" style="left:629.40px;top:161px;font-size:7.4px;letter-spacing:0.000px;color:#2a2a2a;transform:scaleX(0.9810);transform-origin:0 0;">Script:</div>
<div class="tx" style="left:658.75px;top:161px;font-size:7.4px;letter-spacing:0.100px;color:#2a2a2a;">ActionScript 3.0</div>
<div class="tx" style="left:630.60px;top:183px;font-size:7.4px;letter-spacing:0.000px;color:#2a2a2a;transform:scaleX(0.9700);transform-origin:0 0;">Class:</div>
<div class="tx" style="left:620.60px;top:201px;font-size:7.0px;font-weight:bold;-webkit-text-stroke:0;letter-spacing:0.000px;color:#2a2a2a;transform:scaleX(0.8622);transform-origin:0 0;">PROPERTIES</div>
<div class="tx" style="left:636.90px;top:217px;font-size:7.4px;letter-spacing:0.000px;color:#2a2a2a;transform:scaleX(0.8187);transform-origin:0 0;">FPS:</div>
<div class="tx" style="left:658.47px;top:217px;font-size:7.4px;letter-spacing:0.000px;color:#222;transform:scaleX(0.9286);transform-origin:0 0;">12</div>
<div class="tx" style="left:634.75px;top:236px;font-size:7.4px;letter-spacing:0.000px;color:#2a2a2a;transform:scaleX(0.9531);transform-origin:0 0;">Size:</div>
<div class="tx" style="left:657.50px;top:236px;font-size:7.4px;letter-spacing:0.150px;color:#3b7cc6;">550</div>
<div class="tx" style="left:682.50px;top:236px;font-size:7.4px;letter-spacing:0.000px;color:#2a2a2a;">x</div>
<div class="tx" style="left:697.30px;top:236px;font-size:7.4px;letter-spacing:0.600px;color:#3b7cc6;">400</div>
<div class="tx" style="left:726.00px;top:236px;font-size:7.4px;letter-spacing:0.500px;color:#2a2a2a;">px</div>
<div class="tx" style="left:630.00px;top:253px;font-size:7.4px;letter-spacing:0.000px;color:#2a2a2a;transform:scaleX(0.9524);transform-origin:0 0;">Stage:</div>
<div class="tx" style="left:620.60px;top:272px;font-size:7.0px;font-weight:bold;-webkit-text-stroke:0;letter-spacing:0.000px;color:#2a2a2a;transform:scaleX(0.8979);transform-origin:0 0;">SWF HISTORY</div>
<div class="tx" style="left:644.75px;top:286px;font-size:7.4px;letter-spacing:-0.375px;color:#a0a0a0;">Log</div>
<div class="tx" style="left:717.50px;top:286px;font-size:7.4px;letter-spacing:0.000px;color:#2a2a2a;transform:scaleX(0.9722);transform-origin:0 0;">Clear</div>
<div class="tx" style="left:640.00px;top:301px;font-size:7.4px;letter-spacing:0.050px;color:#2a2a2a;">982 B</div>
<div class="tx" style="left:670.60px;top:301px;font-size:7.4px;letter-spacing:0.733px;color:#2a2a2a;">2/12/13</div>
<div class="tx" style="left:710.40px;top:301px;font-size:7.4px;letter-spacing:0.000px;color:#2a2a2a;">2:52 PM</div>
<div class="tx" style="left:640.00px;top:313px;font-size:7.4px;letter-spacing:0.050px;color:#2a2a2a;">774 B</div>
<div class="tx" style="left:670.60px;top:313px;font-size:7.4px;letter-spacing:0.733px;color:#2a2a2a;">2/12/13</div>
<div class="tx" style="left:710.40px;top:313px;font-size:7.4px;letter-spacing:0.000px;color:#2a2a2a;">2:45 PM</div>
<div class="tx" style="left:6.00px;top:375px;font-size:6.9px;letter-spacing:0.171px;color:#2a2a2a;">Timeline</div>
<div class="tx" style="left:42.00px;top:375px;font-size:6.9px;letter-spacing:0.167px;color:#2a2a2a;">Motion Editor</div>
<div class="tx" style="left:25.80px;top:401px;font-size:7.9px;letter-spacing:0.000px;color:#ffffff;transform:scaleX(0.9724);transform-origin:0 0;">circle ctr</div>
<div class="tx" style="left:25.80px;top:412px;font-size:7.9px;letter-spacing:0.000px;color:#2a2a2a;transform:scaleX(0.9500);transform-origin:0 0;">line</div>
<div class="tx" style="left:110.40px;top:389px;font-size:8.0px;letter-spacing:0.000px;color:#2a2a2a;">1</div>
<div class="tx" style="left:131.40px;top:389px;font-size:8.0px;letter-spacing:0.000px;color:#2a2a2a;">5</div>
<div class="tx" style="left:155.40px;top:389px;font-size:8.0px;letter-spacing:0.500px;color:#2a2a2a;">10</div>
<div class="tx" style="left:180.40px;top:389px;font-size:8.0px;letter-spacing:0.500px;color:#2a2a2a;">15</div>
<div class="tx" style="left:206.40px;top:389px;font-size:8.0px;letter-spacing:0.000px;color:#2a2a2a;transform:scaleX(0.9444);transform-origin:0 0;">20</div>
<div class="tx" style="left:231.40px;top:389px;font-size:8.0px;letter-spacing:0.000px;color:#2a2a2a;transform:scaleX(0.9444);transform-origin:0 0;">25</div>
<div class="tx" style="left:256.40px;top:389px;font-size:8.0px;letter-spacing:0.000px;color:#2a2a2a;transform:scaleX(0.9444);transform-origin:0 0;">30</div>
<div class="tx" style="left:281.40px;top:389px;font-size:8.0px;letter-spacing:0.000px;color:#2a2a2a;transform:scaleX(0.9444);transform-origin:0 0;">35</div>
<div class="tx" style="left:306.40px;top:389px;font-size:8.0px;letter-spacing:0.000px;color:#2a2a2a;transform:scaleX(0.9444);transform-origin:0 0;">40</div>
<div class="tx" style="left:331.40px;top:389px;font-size:8.0px;letter-spacing:0.000px;color:#2a2a2a;transform:scaleX(0.9444);transform-origin:0 0;">45</div>
<div class="tx" style="left:356.40px;top:389px;font-size:8.0px;letter-spacing:0.000px;color:#2a2a2a;transform:scaleX(0.9444);transform-origin:0 0;">50</div>
<div class="tx" style="left:381.40px;top:389px;font-size:8.0px;letter-spacing:0.000px;color:#2a2a2a;transform:scaleX(0.9444);transform-origin:0 0;">55</div>
<div class="tx" style="left:406.40px;top:389px;font-size:8.0px;letter-spacing:0.000px;color:#2a2a2a;transform:scaleX(0.9444);transform-origin:0 0;">60</div>
<div class="tx" style="left:431.40px;top:389px;font-size:8.0px;letter-spacing:0.000px;color:#2a2a2a;transform:scaleX(0.9444);transform-origin:0 0;">65</div>
<div class="tx" style="left:456.40px;top:389px;font-size:8.0px;letter-spacing:0.000px;color:#2a2a2a;transform:scaleX(0.9444);transform-origin:0 0;">70</div>
<div class="tx" style="left:481.40px;top:389px;font-size:8.0px;letter-spacing:0.000px;color:#2a2a2a;transform:scaleX(0.9444);transform-origin:0 0;">75</div>
<div class="tx" style="left:506.40px;top:389px;font-size:8.0px;letter-spacing:0.000px;color:#2a2a2a;transform:scaleX(0.9444);transform-origin:0 0;">80</div>
<div class="tx" style="left:531.40px;top:389px;font-size:8.0px;letter-spacing:0.000px;color:#2a2a2a;transform:scaleX(0.9444);transform-origin:0 0;">85</div>
<div class="tx" style="left:556.40px;top:389px;font-size:8.0px;letter-spacing:0.000px;color:#2a2a2a;transform:scaleX(0.9444);transform-origin:0 0;">90</div>
<div class="tx" style="left:242.50px;top:488px;font-size:7.0px;letter-spacing:0.000px;color:#3b7cc6;">7</div>
<div class="tx" style="left:262.00px;top:488px;font-size:7.0px;letter-spacing:0.000px;color:#3b7cc6;">24.00</div>
<div class="tx" style="left:280.50px;top:488px;font-size:7.0px;letter-spacing:0.000px;color:#2a2a2a;transform:scaleX(0.8889);transform-origin:0 0;">fps</div>
<div class="tx" style="left:292.00px;top:488px;font-size:7.0px;letter-spacing:0.000px;color:#3b7cc6;transform:scaleX(0.9000);transform-origin:0 0;">0.3</div>
<div class="tx" style="left:303.00px;top:488px;font-size:7.0px;letter-spacing:0.000px;color:#2a2a2a;">s</div>
</div></body></html>
